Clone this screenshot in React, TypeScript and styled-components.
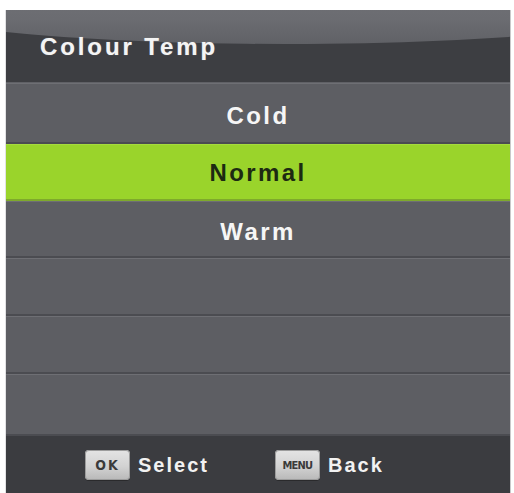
import React from "react";
import styled, { createGlobalStyle } from "styled-components";

const Global = createGlobalStyle`
  html, body { margin: 0; padding: 0; background: #ffffff; }
  body { font-family: "Liberation Sans", Arial, sans-serif; }
`;

const Page = styled.div`
  width: 514px;
  height: 493px;
  padding: 10px 4px 0 6px;
  box-sizing: border-box;
  overflow: hidden;
  background: #ffffff;
`;

const Panel = styled.div`
  width: 504px;
  display: flex;
  flex-direction: column;
  background: #5c5d62;
  box-shadow: 1px 0 0 #c9c9cb, -1px 0 0 #e2e2e4;
`;

const Header = styled.div`
  position: relative;
  height: 73px;
  display: flex;
  align-items: center;
  padding-left: 34px;
  padding-top: 2px;
  box-sizing: border-box;
  overflow: hidden;
  background: #3d3e42;
  border-bottom: 1px solid #606166;
  &::before {
    content: "";
    position: absolute;
    left: -120px;
    width: 800px;
    top: -66px;
    height: 100px;
    border-radius: 0 0 400px 400px / 0 0 42px 42px;
    background: linear-gradient(180deg, #77787d 0%, #6b6c71 75%, #606166 100%);
  }
`;

const Title = styled.h1`
  position: relative;
  margin: 0;
  font-size: 24px;
  font-weight: 700;
  letter-spacing: 2.9px;
  color: #f4f4f4;
  text-shadow: 0 0 1px rgba(255, 255, 255, 0.4);
`;

const List = styled.div`
  display: flex;
  flex-direction: column;
`;

const Row = styled.div<{ $h: number; $active?: boolean }>`
  height: ${(p) => p.$h}px;
  box-sizing: border-box;
  display: flex;
  align-items: center;
  justify-content: center;
  padding-top: ${(p) => (p.$active ? 2 : 5)}px;
  font-size: 24px;
  font-weight: 700;
  letter-spacing: 2.4px;
  color: ${(p) => (p.$active ? "#1d2a12" : "#f6f6f6")};
  background: ${(p) => (p.$active ? "#9ad42b" : "#5d5e63")};
  border-top: 1px solid ${(p) => (p.$active ? "#a6dc3d" : "#6e6f74")};
  border-bottom: 2px solid ${(p) => (p.$active ? "#7fa92c" : "#4b4c51")};
`;

const Footer = styled.div`
  height: 57px;
  display: flex;
  align-items: center;
  padding-left: 79px;
  padding-top: 1px;
  box-sizing: border-box;
  background: #3b3c40;
`;

const Hint = styled.div<{ $gap: number }>`
  display: flex;
  align-items: center;
  margin-right: ${(p) => p.$gap}px;
`;

const Key = styled.span<{ $small?: boolean }>`
  width: 45px;
  height: 30px;
  box-sizing: border-box;
  display: flex;
  align-items: center;
  justify-content: center;
  border-radius: 4px;
  background: linear-gradient(180deg, #e4e4e4 0%, #d2d2d2 55%, #b8b8b8 100%);
  box-shadow: inset 0 0 0 1px #9c9c9c, 0 1px 0 #2a2a2c;
  color: #3a3a3a;
  font-family: "DejaVu Sans Condensed", "DejaVu Sans", sans-serif;
  font-weight: 700;
  font-size: ${(p) => (p.$small ? 11 : 14)}px;
  letter-spacing: ${(p) => (p.$small ? -0.8 : 2)}px;
`;

const HintText = styled.span`
  margin-left: 8px;
  font-size: 20px;
  font-weight: 700;
  letter-spacing: 2px;
  color: #f2f2f2;
`;

const rows: { label: string; h: number; active?: boolean }[] = [
  { label: "Cold", h: 61 },
  { label: "Normal", h: 57, active: true },
  { label: "Warm", h: 57 },
  { label: "", h: 58 },
  { label: "", h: 58 },
  { label: "", h: 62 },
];

export default function App() {
  return (
    <>
      <Global />
      <Page>
        <Panel>
          <Header>
            <Title>Colour Temp</Title>
          </Header>
          <List>
            {rows.map((r, i) => (
              <Row key={i} $h={r.h} $active={r.active}>
                {r.label}
              </Row>
            ))}
          </List>
          <Footer>
            <Hint $gap={66}>
              <Key>OK</Key>
              <HintText>Select</HintText>
            </Hint>
            <Hint $gap={0}>
              <Key $small>MENU</Key>
              <HintText>Back</HintText>
            </Hint>
          </Footer>
        </Panel>
      </Page>
    </>
  );
}
